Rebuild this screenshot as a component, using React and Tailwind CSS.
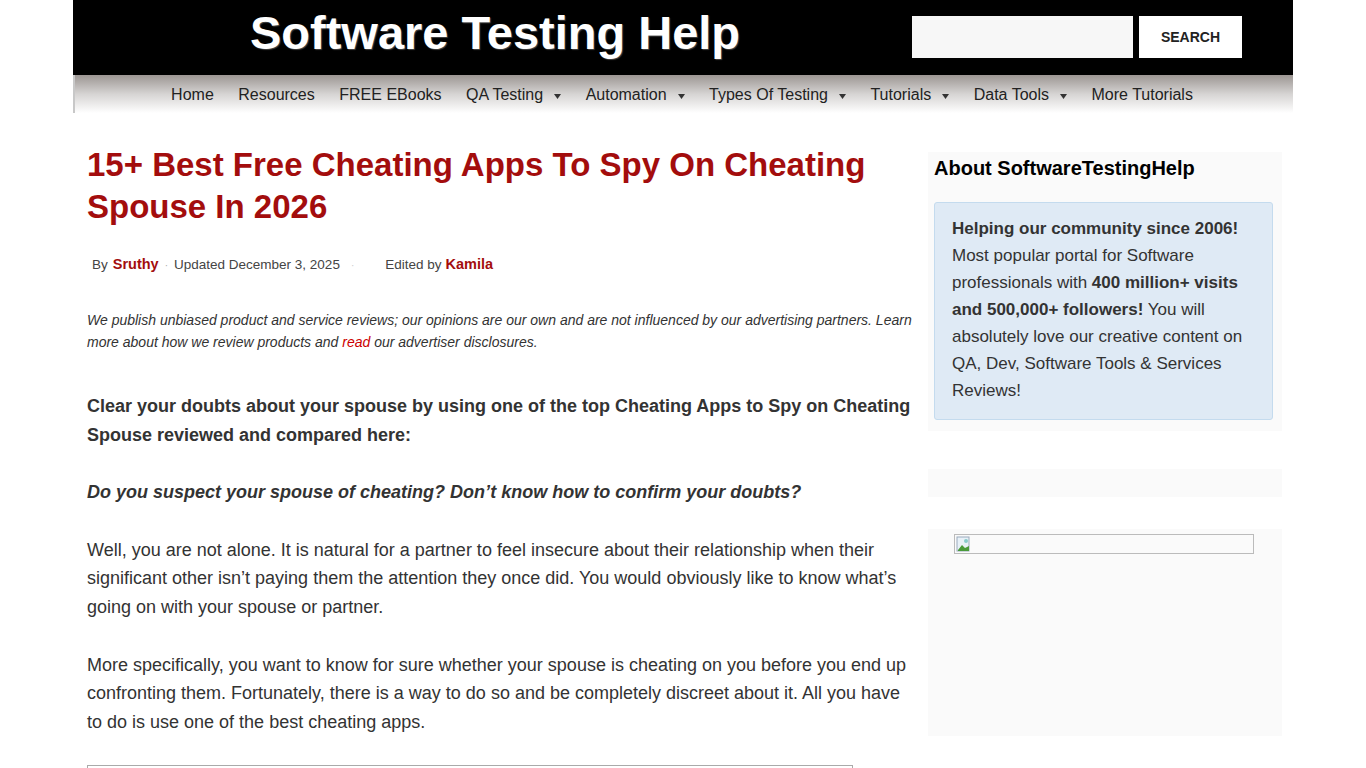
import React from "react";

const Arrow = () => (
  <svg width="7" height="5" viewBox="0 0 7 5" className="ml-[11px] mt-[2px]">
    <path d="M0 0 L7 0 L3.5 5 Z" fill="#333" />
  </svg>
);

const navItems = [
  { t: "Home" },
  { t: "Resources" },
  { t: "FREE EBooks" },
  { t: "QA Testing", a: true },
  { t: "Automation", a: true },
  { t: "Types Of Testing", a: true },
  { t: "Tutorials", a: true },
  { t: "Data Tools", a: true },
  { t: "More Tutorials" },
];

export default function App() {
  return (
    <div className="w-full h-[768px] overflow-hidden bg-white" style={{ fontFamily: '"Liberation Sans", Arial, sans-serif' }}>
      <div className="mx-auto w-[1220px]">
        {/* Header */}
        <div className="h-[75px] bg-black flex items-start">
          <div className="pl-[177px] pt-[7px] w-[839px]">
            <div className="text-white font-bold text-[47px] leading-[52px] [text-shadow:1px_1px_1px_#444]">
              Software Testing Help
            </div>
          </div>
          <div className="flex pt-[16px]">
            <div className="w-[221px] h-[42px] bg-[#f7f7f7]" />
            <div className="ml-[6px] w-[103px] h-[42px] bg-white flex items-center justify-center text-[14px] font-bold text-[#222]">
              SEARCH
            </div>
          </div>
        </div>
        {/* Nav */}
        <div className="h-[38px] bg-gradient-to-b from-[#9c9693] via-[#d6d4d3] to-white flex items-center justify-center gap-[24.5px] pr-[4px] text-[16px] text-[#222] border-l-2 border-[#c8c8c8]">
          {navItems.map((n) => (
            <div key={n.t} className="flex items-center pt-[2px]">
              <span>{n.t}</span>
              {n.a && <Arrow />}
            </div>
          ))}
        </div>

        {/* Body */}
        <div className="flex pl-[14px]">
          {/* Main */}
          <div className="w-[826px] text-[#333]">
            <h1 className="mt-[31px] text-[33px] leading-[42px] font-bold text-[#a30d0d]">
              15+ Best Free Cheating Apps To Spy On Cheating Spouse In 2026
            </h1>
            <div className="mt-[27px] pl-[5px] flex items-center text-[14.5px] text-[#444] h-[20px]">
              <span className="text-[13.5px]">By</span>
              <span className="ml-[5px] font-bold text-[#a30d0d]">Sruthy</span>
              <span className="mx-[6px] text-[#aaa] text-[10px]">·</span>
              <span className="text-[13.5px]">Updated December 3, 2025</span>
              <span className="ml-[11px] text-[#ccc] text-[10px]">·</span>
              <span className="ml-[31px] text-[13.5px]">Edited by</span>
              <span className="ml-[4px] font-bold text-[#a30d0d]">Kamila</span>
            </div>
            <p className="mt-[34px] text-[14px] leading-[22px] italic text-[#333]">
              We publish unbiased product and service reviews; our opinions are our own and are not influenced by our advertising partners. Learn more about how we review products and <span className="text-[#c00]">read</span> our advertiser disclosures.
            </p>
            <p className="mt-[39px] text-[18px] leading-[28.5px] font-bold text-[#333]">
              Clear your doubts about your spouse by using one of the top Cheating Apps to Spy on Cheating Spouse reviewed and compared here:
            </p>
            <p className="mt-[28.5px] text-[18px] leading-[28.5px] font-bold italic text-[#333]">
              Do you suspect your spouse of cheating? Don’t know how to confirm your doubts?
            </p>
            <p className="mt-[29.5px] text-[18px] leading-[28.5px] text-[#333]">
              Well, you are not alone. It is natural for a partner to feel insecure about their relationship when their significant other isn’t paying them the attention they once did. You would obviously like to know what’s going on with your spouse or partner.
            </p>
            <p className="mt-[29.5px] text-[18px] leading-[28.5px] text-[#333]">
              More specifically, you want to know for sure whether your spouse is cheating on you before you end up confronting them. Fortunately, there is a way to do so and be completely discreet about it. All you have to do is use one of the best cheating apps.
            </p>
            <div className="mt-[29px] w-[766px] h-[20px] border-t border-x border-[#aaa]" />
          </div>

          {/* Sidebar */}
          <div className="ml-[15px] w-[354px] pt-[39px]">
            <div className="bg-[#fafafa] px-[6px] pt-[4px] pb-[11px]">
              <h3 className="text-[20px] leading-[24px] font-bold text-black">About SoftwareTestingHelp</h3>
              <div className="mt-[22px] w-[339px] bg-[#dfeaf5] border border-[#c4dbee] rounded-[3px] pl-[17px] pr-[10px] pt-[12px] pb-[15px] text-[17px] leading-[27px] text-[#333]">
                <b>Helping our community since 2006!</b> Most popular portal for Software professionals with <b>400 million+ visits and 500,000+ followers!</b> You will absolutely love our creative content on QA, Dev, Software Tools &amp; Services Reviews!
              </div>
            </div>
            <div className="mt-[38px] h-[28px] bg-[#fafafa]" />
            <div className="mt-[32px] h-[207px] bg-[#fafafa] pt-[5px] pl-[26px]">
              <div className="w-[300px] h-[20px] border border-[#bbb] flex items-start p-[1px]">
                <svg width="16" height="16" viewBox="0 0 16 16">
                  <rect x="1" y="1" width="12" height="14" fill="#e8f1f8" stroke="#9ab" strokeWidth="1" />
                  <path d="M2 14 L6 9 L9 12 L13 10 L13 15 L2 15 Z" fill="#4a9a3a" />
                  <circle cx="10" cy="5" r="2" fill="#8cc" />
                </svg>
              </div>
            </div>
          </div>
        </div>
      </div>
    </div>
  );
}
